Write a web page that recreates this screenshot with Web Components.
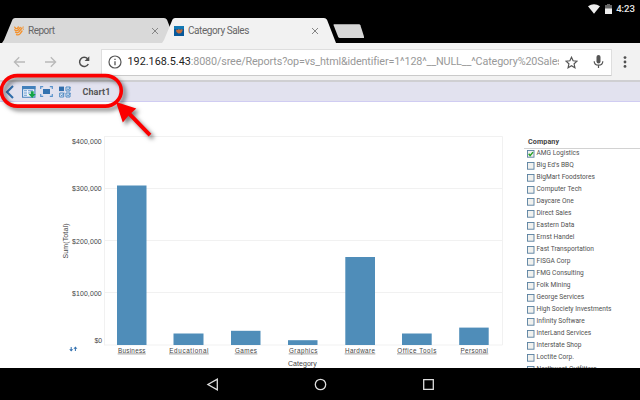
<!DOCTYPE html>
<html lang="en">
<head>
<meta charset="utf-8">
<title>Category Sales</title>
<style>
html,body{margin:0;padding:0}
body{width:640px;height:400px;overflow:hidden;background:#000;font-family:Roboto,"Liberation Sans",sans-serif}
</style>
</head>
<body>
<tablet-screen></tablet-screen>
<script>
function define(name, html, setup) {
  const tpl = document.createElement('template');
  customElements.define(name, class extends HTMLElement {
    connectedCallback() {
      if (this.shadowRoot) return;
      tpl.innerHTML = typeof html === 'function' ? html(this) : html;
      this.attachShadow({mode: 'open'}).append(tpl.content.cloneNode(true));
      if (setup) setup(this);
    }
  });
}

/* Text spaced to a given width. */
define('fit-text', '<style>:host{display:block;white-space:pre}span{display:inline-block}</style><span><slot></slot></span>', el => {
  const span = el.shadowRoot.querySelector('span');
  const w = span.getBoundingClientRect().width;
  span.style.letterSpacing = (parseFloat(el.getAttribute('w')) - w) / el.textContent.length + 'px';
});

define('status-bar', `<style>
:host{display:flex;height:18px;justify-content:flex-end;align-items:center;padding-right:5px;color:#e8e8e8;font-size:9.6px;font-weight:500;box-sizing:border-box}
svg{display:block}.w{margin-right:5px}.b{margin-right:4.5px}fit-text{line-height:18px}
</style>
<svg class="w" width="12" height="10" viewBox="0 0 12 10"><path d="M0 2.3Q6-1.7 12 2.3L6 9.8Z" fill="#eee"/></svg>
<svg class="b" width="7" height="10" viewBox="0 0 7 10"><path d="M0 1h2V0h3v1h2v4H0Z" fill="#666"/><path d="M0 4.5h7V10H0Z" fill="#eee"/></svg>
<fit-text w="18.8">4:23</fit-text>`);

define('browser-tab', el => `<style>
:host{display:block;width:175px;height:25px;position:relative;color:#666;font-size:10px}
.bg{position:absolute;inset:0}
.row{position:relative;display:flex;align-items:center;height:25px;padding:0 18px 0 12px}
fit-text{margin-left:4px;flex:1;line-height:25px}
</style>
<svg class="bg" width="175" height="25"><path d="M0 25 2 22 10.5 1.5Q11.2 0 13 0H162Q164 0 165 1.8L174 25Z" fill="${el.getAttribute('fill')}"/></svg>
<div class="row"><slot name="icon"></slot><fit-text w="${el.getAttribute('w')}">${el.getAttribute('label')}</fit-text>
<svg width="8" height="8" viewBox="0 0 8 8"><path d="M1 1l6 6M7 1L1 7" stroke="#858585" stroke-width="1"/></svg></div>`);

define('tab-strip', `<style>
:host{display:flex;height:25px;padding-left:2px;box-sizing:border-box}
browser-tab+browser-tab{margin-left:-15px}
.new{margin:6px 0 0 -5px}svg{display:block}
</style>
<browser-tab label="Report" w="26.5" fill="#d9d9d9"><svg slot="icon" width="10" height="10" viewBox="0 0 10 10"><g fill="none" stroke="#f3922e" stroke-width="1.35" stroke-linecap="round"><path d="M.8 1.2Q1.5 3 3.2 2.6L4.4 1M.8 3.8Q2 5.4 3.8 4.4L6.3 1.4M1.6 6.3Q3 7.4 4.8 6L8 2M2.5 8.7Q4.5 9.4 6.2 7.6L8 5"/><path d="M9.2.8v.6M9.4 3v.4" stroke-width=".9"/></g></svg></browser-tab>
<browser-tab label="Category Sales" w="61" fill="#f2f2f2"><svg slot="icon" width="10" height="10" viewBox="0 0 10 10"><path d="M0 0h10v10H0Z" fill="#07599b"/><path d="M0 0h10v3H0Z" fill="#1178b4"/><path d="M2 3.5l1.6.5 1-1 1.4.7L8.3 3l.3 1.8L7 7.3 4.5 7.5 2.4 6Z" fill="#c26c3c"/></svg></browser-tab>
<svg class="new" width="32" height="15" viewBox="0 0 32 15"><path d="M2 .3H27Q28 .3 28.4 1.3L32.5 14H8Q6.6 14 6 12.5L1.5 1Q1.3.3 2 .3Z" fill="#d7d7d7"/></svg>`);

define('address-bar', `<style>
:host{display:flex;height:37px;background:#f2f2f2;align-items:center;box-sizing:border-box;padding:0 9.5px 0 13px}
svg{display:block;flex:none}
.box{margin-left:11.5px;width:510.5px;flex:none;box-sizing:border-box;height:27px;margin-top:1px;border:1px solid #dedede;border-bottom:1.5px solid #cacaca;background:#fff;border-radius:1px;display:flex;align-items:center;padding:0 7px 0 6px;color:#999;font-size:10.8px}
.url{display:flex;width:431px;overflow:hidden;margin-left:5.5px;margin-right:2.5px;line-height:26px;flex:none}
fit-text{flex:none}
</style>
<svg width="12" height="12" viewBox="0 0 12 12"><path d="M12 6H1.5M6.2 1.2L1.4 6l4.8 4.8" fill="none" stroke="#b9b9b9" stroke-width="1.3"/></svg>
<svg width="12" height="12" viewBox="0 0 12 12" style="margin-left:20px"><path d="M0 6H10.5M5.8 1.2L10.6 6l-4.8 4.8" fill="none" stroke="#b9b9b9" stroke-width="1.3"/></svg>
<svg width="12" height="12" viewBox="0 0 12 12" style="margin-left:20.5px"><path d="M10.3 8A4.6 4.6 0 1 1 9.6 2.8" fill="none" stroke="#4d4d4d" stroke-width="1.5"/><path d="M11.3.3V5H6.6Z" fill="#4d4d4d"/></svg>
<div class="box">
<svg width="14" height="14" viewBox="0 0 14 14"><circle cx="7" cy="7" r="6" fill="none" stroke="#555" stroke-width="1.2"/><path d="M7 6.2V10.3M7 3.7V5" stroke="#555" stroke-width="1.3"/></svg>
<div class="url"><fit-text w="63.3" style="color:#222">192.168.5.43</fit-text><fit-text w="371.5">:8080/sree/Reports?op=vs_html&amp;identifier=1^128^__NULL__^Category%20Sales</fit-text></div>
<svg width="13" height="13" viewBox="0 0 13 13" style="margin-left:4px"><path d="M6.5 1.3 8.1 4.8 12 5.2 9.1 7.8 9.9 11.7 6.5 9.7 3.1 11.7 3.9 7.8 1 5.2 4.9 4.8Z" fill="none" stroke="#555" stroke-width="1.2"/></svg>
<svg width="11" height="14" viewBox="0 0 11 14" style="margin-left:14.5px"><rect x="3.5" y="0" width="4" height="8.5" rx="2" fill="#555"/><path d="M1.2 6.2Q1.3 10.2 5.5 10.2T9.8 6.2M5.5 10V13" fill="none" stroke="#555" stroke-width="1.2"/></svg>
</div>
<svg width="4" height="12" viewBox="0 0 4 12" style="margin-left:11.5px"><g fill="#505050"><circle cx="2" cy="1.6" r="1.4"/><circle cx="2" cy="6" r="1.4"/><circle cx="2" cy="10.4" r="1.4"/></g></svg>`);

define('report-toolbar', `<style>
:host{display:flex;height:22px;background:#e2e2ef;border-top:2px solid #cfcfd2;border-bottom:1px solid #d0ccf2;box-sizing:border-box;align-items:center;padding-left:5px;color:#555;font-size:9px;font-weight:700}
svg{display:block}
</style>
<svg width="9" height="14" viewBox="0 0 9 14"><path d="M8 1 2 7l6 6" fill="none" stroke="#326fac" stroke-width="2.1"/></svg>
<svg width="14" height="12" viewBox="0 0 14 12" style="margin-left:8px"><path d="M.6.6H12.9V11.3H.6Z" fill="#edf2fb" stroke="#4280bb" stroke-width="1.1"/><path d="M0 0h13.5v3.2H0Z" fill="#4280bb"/><path d="M2 4.8h3M6 4.8h5M2 7h3M6 7h2M2 9.2h3" stroke="#6499cd" stroke-width="1.1"/><path d="M8.7 5.3h3V8h2.1L10.2 12 6.6 8h2.1Z" fill="#13a447"/></svg>
<svg width="13" height="11" viewBox="0 0 13 11" style="margin-left:4px"><path d="M.7 3V.7H3.2M9.8.7h2.5V3M12.3 8v2.3H9.8M3.2 10.3H.7V8" fill="none" stroke="#5a92cb" stroke-width="1.2"/><path d="M3 3h7v5H3Z" fill="#3472b0"/></svg>
<svg width="12" height="12" viewBox="0 0 12 12" style="margin-left:5.5px"><path d="M0 .6h5v4.5H0Z" fill="#326fac"/><g fill="#e7eef9" stroke="#4d88c1"><path d="M7 1h4v4H7ZM.7 7h4v4h-4ZM7 7h4v4H7Z"/><path d="M8 2.7l1.2 1.1L11.6.8M1.7 8.7l1.2 1.1L5.3 6.8M8 8.7l1.2 1.1L11.6 6.8" fill="none"/></g></svg>
<fit-text w="28" style="margin-left:12px">Chart1</fit-text>`);

const bars = [['Business',117,146.5,185.5,118,145.5],['Educational',173.5,203.5,333.5,169.3,208.5],['Games',231,260.5,330.8,235,257],['Graphics',288,317.5,340.2,289,317.5],['Hardware',345.3,375,257,345,375],['Office Tools',402,431.7,333.5,397.3,436.3],['Personal',459.2,488.7,327.6,460.5,488]];
const grid = [136.5,188.5,240.5,292.5,345];
const ticks = [['$400,000',143.9,29.7,72],['$300,000',191,29.7,72],['$200,000',243.5,29.7,72],['$100,000',295.6,29.7,72],['$0',342.9,7.5,94.5]];
define('sales-chart', () => `<style>
:host{display:block;width:520px;height:266px;flex:none}
svg{display:block;font-family:"Liberation Sans",Arial,sans-serif;fill:#444}
</style><svg width="520" height="266" viewBox="0 102 520 266">
<g stroke="#f1f1f1" fill="none">${grid.map(y => `<path d="M104 ${y}H502.5"/>`).join('')}<path d="M104.5 136.5V345M502.5 136.5V345"/></g>
${bars.map(b => `<rect x="${b[1]}" y="${b[3]}" width="${b[2]-b[1]}" height="${345-b[3]}" fill="#4f8db9"/>
<text x="${b[4]}" y="352.8" font-size="6.3" fill="#444" textLength="${b[5]-b[4]}">${b[0]}</text><path d="M${b[4]-.3} 353.9H${b[5]+.3}" stroke="#888" stroke-width=".8"/>`).join('')}
${ticks.map(t => `<text x="${t[3]}" y="${t[1]}" font-size="6.9" textLength="${t[2]}">${t[0]}</text>`).join('')}
<text transform="translate(67.8 258.5) rotate(-90)" font-size="7" textLength="35">Sum(Total)</text>
<text x="288" y="365.5" font-size="7" textLength="28.7">Category</text>
<path d="M71.2 347v3.5M75.4 351v-3.5" stroke="#3472b0"/><path d="M69.2 349.3h4l-2 2.3ZM73.4 348.8h4l-2-2.3Z" fill="#3472b0"/>
</svg>`);

define('check-item', el => `<style>
:host{display:flex;height:12px;align-items:center;font-size:6.6px;color:#505050;padding-left:3px}
svg{display:block}fit-text{margin-left:2px;line-height:11px;padding-bottom:1px}
</style><svg width="7.5" height="8" viewBox="0 0 7.5 8"><rect x=".5" y=".5" width="6.5" height="6.7" fill="#f1f1ee" stroke="#587f9f" stroke-width=".9"/>${el.hasAttribute('checked') ? '<path d="M1.7 3.8 3.1 5.6 6 2.1" fill="none" stroke="#22a122" stroke-width="1.4"/>' : ''}</svg>
<fit-text w="${el.getAttribute('w')}">${el.getAttribute('label')}</fit-text>`);

const companies = [['AMG Logistics',43],["Big Ed's BBQ",37.3],['BigMart Foodstores',58.5],['Computer Tech',45.3],['Daycare One',37.3],['Direct Sales',35],['Eastern Data',38],['Ernst Handel',38],['Fast Transportation',57.5],['FISGA Corp',34],['FMG Consulting',47.3],['Folk Mining',34],['George Services',47.7],['High Society Investments',75],['Infinity Software',48],['InterLand Services',54.7],['Interstate Shop',45],['Loctite Corp.',37.5],['Northwest Outfitters',60]];
define('company-list', () => `<style>
:host{display:block;flex:1;padding:35px 0 0 4px;overflow:hidden;height:266px;box-sizing:border-box}
.h{font-size:7.2px;font-weight:700;color:#444;border-bottom:1px solid #d2d2d2;height:11px;line-height:10px;padding-left:4px;margin-bottom:-1.4px}
</style><div class="h"><fit-text w="31.2">Company</fit-text></div>
${companies.map((c, i) => `<check-item ${i ? '' : 'checked'} w="${c[1]}" label="${c[0]}"></check-item>`).join('')}`);

define('nav-bar', `<style>
:host{display:flex;height:32px;background:#000;align-items:center;justify-content:center;gap:95px}
svg{display:block}
</style>
<svg width="13" height="13" viewBox="0 0 13 13"><path d="M11.3 1.2V11.8L1.9 6.5Z" fill="none" stroke="#ddd" stroke-width="1.3"/></svg>
<svg width="13" height="13" viewBox="0 0 13 13"><circle cx="6.5" cy="6.5" r="5.2" fill="none" stroke="#ddd" stroke-width="1.3"/></svg>
<svg width="13" height="13" viewBox="0 0 13 13"><path d="M1.7 1.7H11.3V11.3H1.7Z" fill="none" stroke="#ddd" stroke-width="1.3"/></svg>`);

/* Red ring and arrow laid over the toolbar. */
define('callout-mark', `<style>:host{position:absolute;left:0;top:70px;pointer-events:none}svg{display:block;filter:drop-shadow(3px 3px 2px rgba(0,0,0,.5))}</style>
<svg width="170" height="80" viewBox="0 70 170 80"><rect x="1.3" y="75.6" width="120" height="30.5" rx="16" fill="none" stroke="#fb0000" stroke-width="3.6"/>
<path d="M116 102 136.3 108.5 131.3 113 151.4 133.7 148.6 136.5 128.4 115.7 122.8 122.5Z" fill="#fb0000"/></svg>`);

define('tablet-screen', `<style>
:host{display:block;position:relative;width:640px;height:400px;overflow:hidden;background:#000}
main{display:flex;height:266px;background:#fff;overflow:hidden}
</style>
<status-bar></status-bar><tab-strip></tab-strip><address-bar></address-bar><report-toolbar></report-toolbar>
<main><sales-chart></sales-chart><company-list></company-list></main>
<nav-bar></nav-bar><callout-mark></callout-mark>`);
</script>
</body>
</html>
